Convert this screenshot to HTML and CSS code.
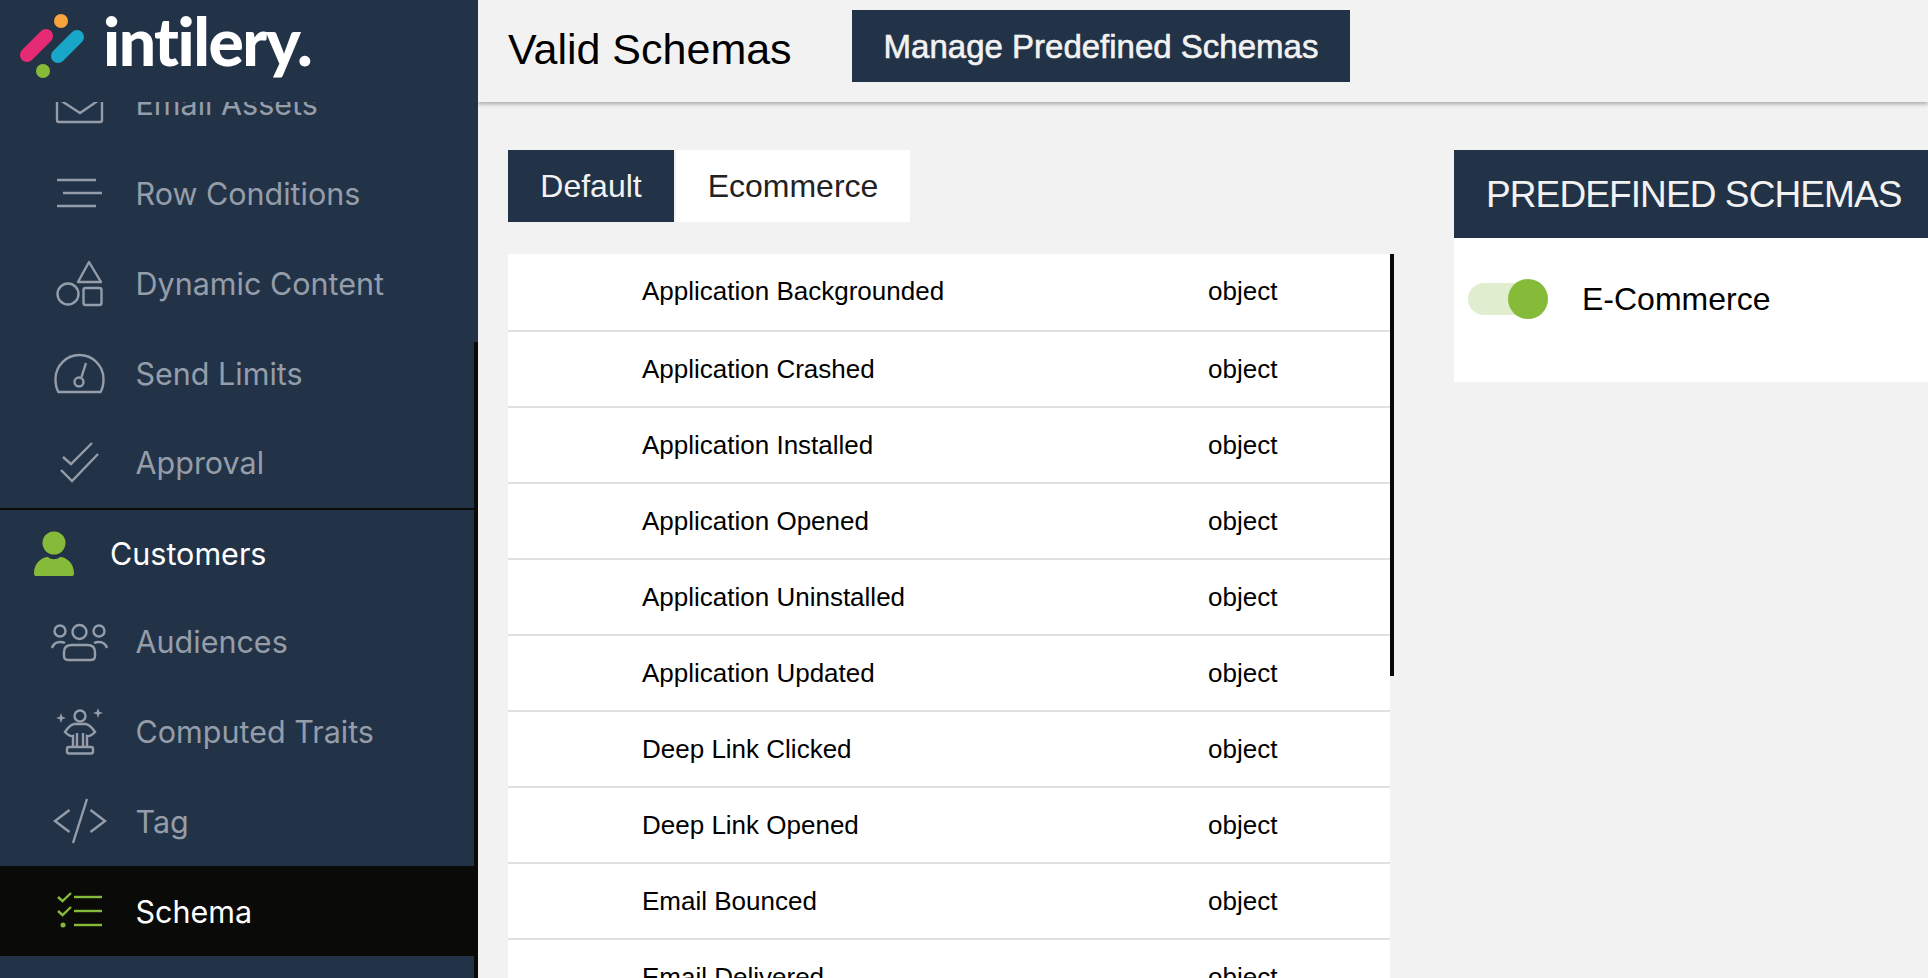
FILE: index.html
```html
<!DOCTYPE html>
<html lang="en">
  <head>
    <meta charset="UTF-8">
    <meta name="viewport" content="width=device-width, initial-scale=1.0">
    <title>Valid Schemas</title>
    <link rel="stylesheet" href="styles.css">
  </head>
  <body>
    <div class="app">

      <!-- sidebar -->
      <aside class="sidebar">
        <div class="logo">
          <svg class="logoMark" viewBox="0 0 100 80">
            <circle cx="61" cy="21" r="7" fill="#f7a43c"/>
            <line x1="27" y1="55" x2="46" y2="36" stroke="#e72a74" stroke-width="14" stroke-linecap="round"/>
            <line x1="58" y1="56" x2="77" y2="37" stroke="#18a6c9" stroke-width="14" stroke-linecap="round"/>
            <circle cx="43" cy="71" r="7" fill="#86bb39"/>
          </svg>
          <span class="logoWord">intilery.</span>
        </div>

        <nav class="nav">
          <a class="navItem navFirst">
            <svg class="icon" viewBox="0 0 60 60">
              <rect x="7" y="15" width="45" height="34" rx="2"/>
              <polyline points="7,25 30,40 52,25"/>
            </svg>
            <span>Email Assets</span>
          </a>
          <a class="navItem">
            <svg class="icon" viewBox="0 0 60 60">
              <line x1="7" y1="17" x2="46" y2="17"/>
              <line x1="13" y1="30" x2="52" y2="30"/>
              <line x1="7" y1="43" x2="46" y2="43"/>
            </svg>
            <span>Row Conditions</span>
          </a>
          <a class="navItem">
            <svg class="icon" viewBox="0 0 60 60">
              <path d="M39 9 L51 29 H28 Z" stroke-linejoin="round"/>
              <circle cx="18" cy="41" r="10.5"/>
              <rect x="33.5" y="35" width="18" height="17" rx="2"/>
            </svg>
            <span>Dynamic Content</span>
          </a>
          <a class="navItem">
            <svg class="icon" viewBox="0 0 60 60">
              <path d="M8.5 49 C6 45 5.5 42 5.5 36 A24 24 0 0 1 53.5 36 C53.5 42 53 45 50.5 49 Z"/>
              <line x1="36" y1="20" x2="31.5" y2="34"/>
              <circle cx="29" cy="39" r="4.5"/>
            </svg>
            <span>Send Limits</span>
          </a>
          <a class="navItem navLast">
            <svg class="icon" viewBox="0 0 60 60">
              <polyline points="13,25 21,32 42,11"/>
              <polyline points="11,38 22,49 48,22"/>
            </svg>
            <span>Approval</span>
          </a>

          <a class="navHead">
            <svg class="headIcon" viewBox="0 0 50 60">
              <circle cx="24" cy="20" r="11.5"/>
              <path d="M4 50 C4 40 12 34 18 34 C21 37 27 37 30 34 C36 34 44 40 44 50 V51 Q44 53 42 53 H6 Q4 53 4 51 Z"/>
            </svg>
            <span>Customers</span>
          </a>

          <a class="navItem">
            <svg class="icon" viewBox="0 0 60 60">
              <circle cx="29.5" cy="21" r="7"/>
              <circle cx="10" cy="20" r="5.5"/>
              <circle cx="49" cy="20" r="5.5"/>
              <path d="M14 45 V41 Q14 34 22 34 H37 Q45 34 45 41 V45 Q45 49 41 49 H18 Q14 49 14 45 Z"/>
              <path d="M2 37 Q4 31 10 31 Q13 31 15 32"/>
              <path d="M57 37 Q55 31 49 31 Q46 31 44 32"/>
            </svg>
            <span>Audiences</span>
          </a>
          <a class="navItem">
            <svg class="icon" viewBox="0 0 60 60">
              <circle cx="30" cy="15" r="5.5"/>
              <path d="M24 23 C20 24 17 28 15 31 Q20 36 23 35 V46"/>
              <path d="M36 23 C40 24 43 28 45 31 Q40 36 37 35 V46"/>
              <path d="M24 23 H36 M27 32 V46 M33 32 V46"/>
              <rect x="17" y="46" width="26" height="6.5" rx="2"/>
              <path class="spark" d="M11 12 L12.3 15.7 L16 17 L12.3 18.3 L11 22 L9.7 18.3 L6 17 L9.7 15.7 Z"/>
              <path class="spark" d="M48 7 L49.3 10.7 L53 12 L49.3 13.3 L48 17 L46.7 13.3 L43 12 L46.7 10.7 Z"/>
            </svg>
            <span>Computed Traits</span>
          </a>
          <a class="navItem">
            <svg class="icon" viewBox="0 0 60 60">
              <polyline points="19.5,19 5,30 19.5,41"/>
              <polyline points="40.5,19 55,30 40.5,41"/>
              <line x1="37" y1="8" x2="23" y2="52"/>
            </svg>
            <span>Tag</span>
          </a>
          <a class="navItem navActive">
            <svg class="icon" viewBox="0 0 60 60">
              <polyline points="8,16 12.5,20 21,12"/>
              <polyline points="8,30 12.5,34 21,26"/>
              <circle class="dot" cx="13" cy="44" r="2.5"/>
              <line x1="24" y1="16" x2="52" y2="16"/>
              <line x1="24" y1="30" x2="52" y2="30"/>
              <line x1="24" y1="44" x2="52" y2="44"/>
            </svg>
            <span>Schema</span>
          </a>
        </nav>
        <div class="sideThumb"></div>
      </aside>

      <!-- main area -->
      <main class="main">
        <header class="topbar">
          <h1>Valid Schemas</h1>
          <button class="manageBtn" type="button">Manage Predefined Schemas</button>
        </header>

        <div class="content">
          <section class="schemas">
            <div class="tabs">
              <button class="tab tabOn" type="button">Default</button>
              <button class="tab" type="button">Ecommerce</button>
            </div>
            <div class="tableWrap">
              <div class="table">
                <div class="row"><span>Application Backgrounded</span><span>object</span></div>
                <div class="row"><span>Application Crashed</span><span>object</span></div>
                <div class="row"><span>Application Installed</span><span>object</span></div>
                <div class="row"><span>Application Opened</span><span>object</span></div>
                <div class="row"><span>Application Uninstalled</span><span>object</span></div>
                <div class="row"><span>Application Updated</span><span>object</span></div>
                <div class="row"><span>Deep Link Clicked</span><span>object</span></div>
                <div class="row"><span>Deep Link Opened</span><span>object</span></div>
                <div class="row"><span>Email Bounced</span><span>object</span></div>
                <div class="row"><span>Email Delivered</span><span>object</span></div>
              </div>
              <div class="tableThumb"></div>
            </div>
          </section>

          <section class="panel">
            <h2>PREDEFINED SCHEMAS</h2>
            <div class="panelBody">
              <span class="toggle"><span class="knob"></span></span>
              <span>E-Commerce</span>
            </div>
          </section>
        </div>
      </main>
    </div>
  </body>
</html>
```

FILE: styles.css
```css
:root {
    --navy: #233347;
    --green: #86bb39;
    --grey: #949da9;
}
* {
    box-sizing: border-box;
}
html, body {
    margin: 0;
    height: 100%;
    overflow: hidden;
}
body {
    font-family: "Liberation Sans", Arial, sans-serif;
    color: #000;
    background: #f2f2f2;
}
button {
    font-family: inherit;
    border: 0;
}
.app {
    display: flex;
    height: 100vh;
}

/* sidebar */
.sidebar {
    position: relative;
    flex: 0 0 478px;
    display: flex;
    flex-direction: column;
    background: var(--navy);
    font-family: Inter, sans-serif;
    font-size: 30.5px;
    overflow: hidden;
}
.logo {
    flex: 0 0 102px;
    display: flex;
    height: 102px;
    background: var(--navy);
}
.logoMark {
    width: 100px;
    height: 80px;
    flex: none;
}
.logoWord {
    height: 78px;
    padding-top: 5px;
    margin-left: 3px;
    overflow: hidden;
    color: #fff;
    font-family: Lato, sans-serif;
    font-weight: 900;
    font-size: 66px;
    line-height: 72px;
    letter-spacing: -1.5px;
}
.nav {
    flex: 1;
    min-height: 0;
    width: 474px;
    overflow: hidden;
}
.navItem, .navHead {
    display: flex;
    align-items: center;
    height: 90px;
    color: var(--grey);
}
.navItem span, .navHead span {
    margin-top: 1px;
}
.navItem {
    padding-left: 50px;
}
.navFirst {
    margin-top: -44px;
}
.navLast {
    height: 92px;
    padding-bottom: 2px;
    border-bottom: 2px solid #0a0a08;
}
.navHead {
    height: 86px;
    padding-left: 30px;
    color: #fff;
}
.navActive {
    background: #0a0a08;
    color: #fff;
}
.icon {
    flex: none;
    width: 60px;
    height: 60px;
    margin-right: 25.5px;
    fill: none;
    stroke: var(--grey);
    stroke-width: 2.4;
}
.icon .spark {
    fill: var(--grey);
    stroke: none;
}
.navActive .icon {
    stroke: var(--green);
}
.navActive .dot {
    fill: var(--green);
    stroke: none;
}
.headIcon {
    flex: none;
    width: 50px;
    height: 60px;
    margin-right: 30px;
    fill: var(--green);
}
.sideThumb {
    position: absolute;
    top: 342px;
    bottom: 0;
    right: 0;
    width: 4px;
    background: #0a0a08;
}

/* main */
.main {
    flex: 1;
    min-width: 0;
    display: flex;
    flex-direction: column;
}
.topbar {
    flex: 0 0 102px;
    display: flex;
    align-items: center;
    padding: 0 0 10px 30px;
    box-shadow: 0 2px 4px rgba(0, 0, 0, 0.3);
}
h1 {
    margin: 6px 61px 0 0;
    width: 283px;
    font-size: 43px;
    font-weight: 400;
    white-space: nowrap;
}
.manageBtn {
    width: 498px;
    height: 72px;
    padding-top: 2px;
    background: var(--navy);
    color: #f2f2f2;
    font-size: 33px;
    -webkit-text-stroke: 0.6px #f2f2f2;
}
.content {
    flex: 1;
    min-height: 0;
    display: flex;
    padding: 48px 0 0 30px;
}
.schemas {
    flex: 0 0 886px;
}
.tabs {
    display: flex;
    gap: 2px;
    height: 72px;
    margin-bottom: 32px;
}
.tab {
    height: 72px;
    background: #fff;
    color: #222;
    font-size: 32px;
}
.tab:first-child {
    width: 166px;
}
.tab:last-child {
    width: 234px;
}
.tabOn {
    background: var(--navy);
    color: #f2f2f2;
}
.tableWrap {
    position: relative;
}
.table {
    width: 882px;
    background: #fff;
}
.row {
    display: grid;
    grid-template-columns: 566px 1fr;
    align-items: center;
    height: 76px;
    padding-left: 134px;
    border-bottom: 2px solid #e0e0e0;
    font-size: 26px;
}
.row:first-child {
    height: 78px;
    padding-bottom: 2px;
}
.tableThumb {
    position: absolute;
    top: 0;
    left: 882px;
    width: 4px;
    height: 422px;
    background: #0a0a08;
}

/* predefined schemas panel */
.panel {
    flex: 0 0 474px;
    margin-left: 60px;
    align-self: flex-start;
    background: #fff;
}
h2 {
    margin: 0;
    height: 88px;
    padding-left: 32px;
    background: var(--navy);
    color: #f2f2f2;
    font-size: 37px;
    font-weight: 400;
    letter-spacing: -0.9px;
    line-height: 89px;
    white-space: nowrap;
}
.panelBody {
    display: flex;
    align-items: center;
    gap: 34px;
    height: 144px;
    padding: 0 0 22px 14px;
    font-size: 32px;
}
.toggle {
    position: relative;
    width: 80px;
    height: 32px;
    border-radius: 16px;
    background: #e0edcf;
}
.knob {
    position: absolute;
    top: -4px;
    left: 40px;
    width: 40px;
    height: 40px;
    border-radius: 50%;
    background: var(--green);
}
```
